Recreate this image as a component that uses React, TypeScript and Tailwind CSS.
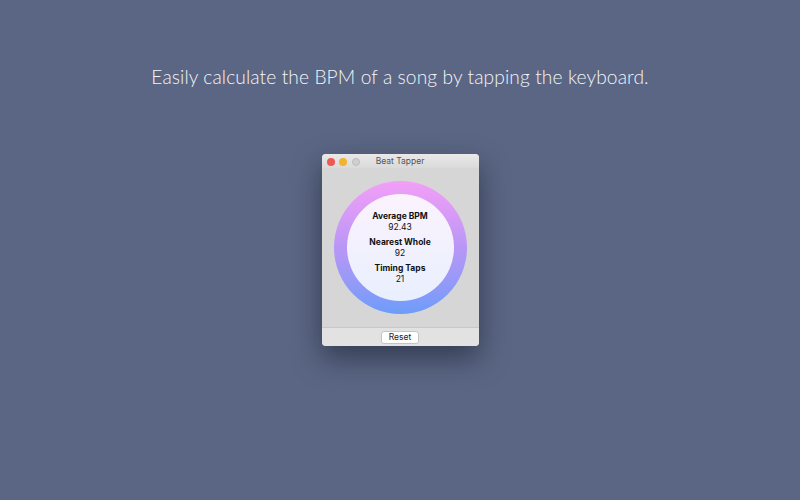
import React from "react";

export default function App() {
  return (
    <div className="w-[800px] h-[500px] bg-[#5a6684] flex flex-col items-center overflow-hidden" style={{ fontFamily: "Lato, 'Open Sans', sans-serif" }}>
      <div className="mt-[63px] h-[28px] text-[19.2px] leading-[28px] font-light text-[#f4f5f8] tracking-[0.1px]">
        Easily calculate the BPM of a song by tapping the keyboard.
      </div>
      <div className="mt-[63px] w-[157px] h-[192px] rounded-[4px] overflow-hidden flex flex-col bg-[#d6d6d6] shadow-[0_12px_28px_rgba(20,25,40,0.55)]" style={{ fontFamily: "Inter, 'Liberation Sans', sans-serif" }}>
        <div className="relative h-[14px] flex items-center justify-center bg-gradient-to-b from-[#e9e9e9] to-[#dadada]">
          <div className="absolute left-[5px] top-[3.5px] flex gap-[4.5px]">
            <div className="w-[8px] h-[8px] rounded-full bg-[#ee5a52]" />
            <div className="w-[8px] h-[8px] rounded-full bg-[#f2b32f]" />
            <div className="w-[8px] h-[8px] rounded-full bg-[#cfcfcf] border border-[#bdbdbd]" />
          </div>
          <span className="text-[8.5px] text-[#555] leading-none mt-[1px]">Beat Tapper</span>
        </div>
        <div className="flex-1 flex items-center justify-center">
          <div className="w-[133px] h-[133px] rounded-full bg-gradient-to-b from-[#f39ff7] via-[#b996f6] to-[#6c9cf9] flex items-center justify-center">
            <div className="w-[107px] h-[107px] rounded-full bg-gradient-to-b from-[#fbf3fd] to-[#e9effe] flex flex-col items-center justify-center text-[#111] text-[8.5px] leading-[10.5px]">
              <div className="font-bold">Average BPM</div>
              <div className="mb-[5px]">92.43</div>
              <div className="font-bold">Nearest Whole</div>
              <div className="mb-[5px]">92</div>
              <div className="font-bold">Timing Taps</div>
              <div>21</div>
            </div>
          </div>
        </div>
        <div className="h-[19px] border-t border-[#c8c8c8] bg-[#e2e2e2] flex items-center justify-center">
          <div className="w-[38px] h-[13px] bg-white rounded-[3px] border border-[#c4c4c4] flex items-center justify-center text-[8.5px] text-[#222] leading-none">
            Reset
          </div>
        </div>
      </div>
    </div>
  );
}
